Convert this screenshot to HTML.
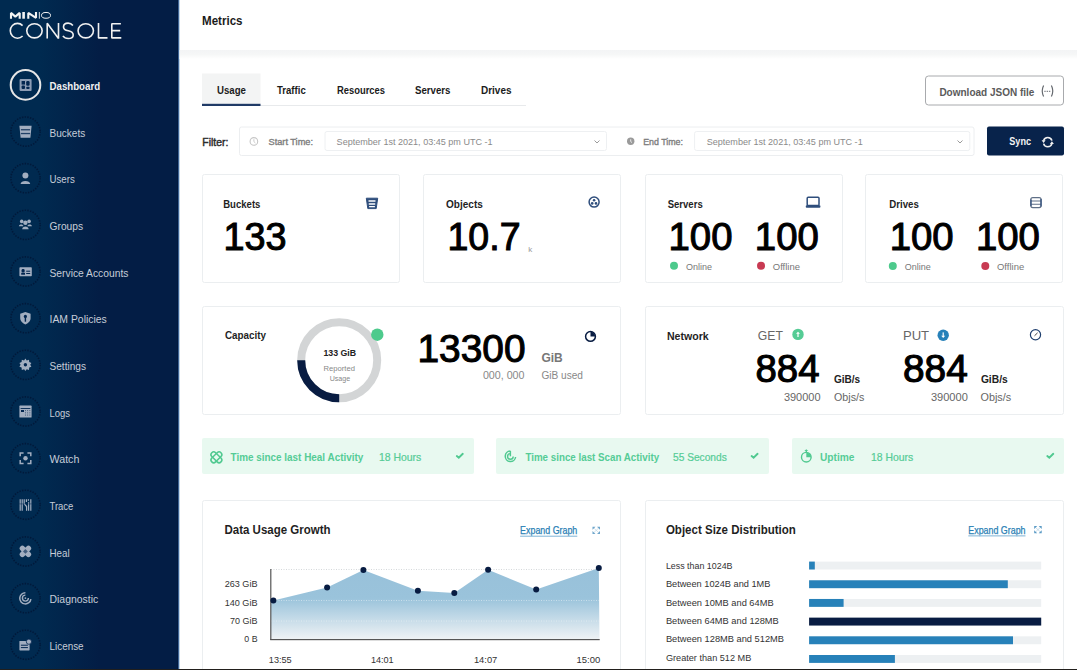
<!DOCTYPE html>
<html><head><meta charset="utf-8"><title>MinIO Console - Metrics</title>
<style>
html,body{margin:0;padding:0;background:#fff;width:1077px;height:670px;overflow:hidden}
svg{display:block}
text{font-family:"Liberation Sans", sans-serif}
</style></head><body>
<svg width="1077" height="670" viewBox="0 0 1077 670">
<defs>
<linearGradient id="sb" x1="0" y1="0" x2="1" y2="0">
<stop offset="0" stop-color="#002a50"/>
<stop offset="0.225" stop-color="#002a50"/>
<stop offset="0.56" stop-color="#031d45"/>
<stop offset="1" stop-color="#031d45"/>
</linearGradient>
<linearGradient id="area" gradientUnits="userSpaceOnUse" x1="0" y1="568" x2="0" y2="640">
<stop offset="0" stop-color="#98c1da"/>
<stop offset="0.42" stop-color="#9ac3db"/>
<stop offset="1" stop-color="#f0f3f5"/>
</linearGradient>
<linearGradient id="hdrsh" x1="0" y1="0" x2="0" y2="1">
<stop offset="0" stop-color="#f3f4f5"/><stop offset="0.5" stop-color="#f6f7f7"/>
<stop offset="1" stop-color="#ffffff"/>
</linearGradient>
</defs>

<rect x="0" y="0" width="178" height="670" fill="url(#sb)"/>
<rect x="177" y="0" width="1" height="670" fill="#01183d"/>
<rect x="178" y="0" width="1" height="670" fill="#3f6596"/>
<rect x="179" y="0" width="1" height="670" fill="#c2d6e8"/>
<g fill="none" stroke="#f4f4f4" stroke-linejoin="bevel">
<path d="M11 18.7 V12.9 L15.35 16.6 L19.7 12.9 V18.7" stroke-width="2.1"/>
<path d="M23.6 12 V18.7" stroke-width="2.6"/>
<path d="M28.3 18.7 V12.9 L36 17.8 V12" stroke-width="2.1"/>
<path d="M39.35 12 V18.7" stroke-width="0.9"/>
<ellipse cx="46" cy="15.35" rx="4.5" ry="2.9" stroke-width="1"/>
</g>
<g fill="none" stroke="#f0f0f0" stroke-width="1.6" stroke-linejoin="bevel">
<path d="M22.6 25.6 A7.2 7.4 0 1 0 22.6 36"/>
<ellipse cx="34.45" cy="30.8" rx="7.7" ry="7.1"/>
<path d="M47.2 38.6 V23.2 L58.5 38.4 V23"/>
<path d="M72.9 25.4 C71.6 23.8 70 23.1 68.1 23.1 C65.2 23.1 63.5 24.7 63.5 26.9 C63.5 29.4 65.6 30.2 68.3 30.8 C71.3 31.5 73.2 32.5 73.2 34.9 C73.2 37.2 71.2 38.5 68.2 38.5 C65.8 38.5 64 37.5 62.9 35.9"/>
<ellipse cx="85.75" cy="30.8" rx="7.7" ry="7.1"/>
<path d="M98.5 23 V37.9 H107.5"/>
<path d="M120.9 23.7 H111.8 V37.9 H121.3 M111.8 30.6 H120.2"/>
</g>
<circle cx="25.5" cy="84.9" r="14.8" fill="none" stroke="#e6e6e6" stroke-width="2"/>
<text x="49.5" y="89.9" font-size="11.3" font-weight="700" fill="#f0f0f0" textLength="50.6" lengthAdjust="spacingAndGlyphs" >Dashboard</text>
<g transform="translate(19.4 78.8)"><rect x="0.2" y="0.2" width="12" height="12" rx="1" fill="#8d9db5"/><rect x="2.2" y="2.2" width="3.4" height="3.6" fill="#022650"/><rect x="6.8" y="2.2" width="3.4" height="4.8" rx="1.2" fill="#022650"/><rect x="2.2" y="6.8" width="3.4" height="3.4" rx="1" fill="#022650"/><rect x="6.8" y="8" width="3.4" height="2.2" rx="1" fill="#022650"/></g>
<circle cx="25.5" cy="131.6" r="14.6" fill="none" stroke="#001636" stroke-width="1.6" stroke-dasharray="1.4 1.3" opacity="0.85"/>
<text x="49.5" y="136.6" font-size="11.3" font-weight="400" fill="#c6cdd8" textLength="35.8" lengthAdjust="spacingAndGlyphs" >Buckets</text>
<g transform="translate(19.4 125.5)"><path d="M0 0.3 H12.2 L11 12.2 H1.2 Z" fill="#a2aec0"/><rect x="1.5" y="3.6" width="9.2" height="1.3" fill="#022650" opacity="0.8"/><rect x="1.5" y="7.4" width="9.2" height="1.3" fill="#022650" opacity="0.8"/></g>
<circle cx="25.5" cy="178.2" r="14.6" fill="none" stroke="#001636" stroke-width="1.6" stroke-dasharray="1.4 1.3" opacity="0.85"/>
<text x="49.5" y="183.2" font-size="11.3" font-weight="400" fill="#c6cdd8" textLength="25.3" lengthAdjust="spacingAndGlyphs" >Users</text>
<g transform="translate(19.4 172.1)"><circle cx="6" cy="3.3" r="3" fill="#a2aec0"/><path d="M1.2 12 C1.2 7.8 10.8 7.8 10.8 12 Z" fill="#a2aec0"/></g>
<circle cx="25.5" cy="224.9" r="14.6" fill="none" stroke="#001636" stroke-width="1.6" stroke-dasharray="1.4 1.3" opacity="0.85"/>
<text x="49.5" y="229.9" font-size="11.3" font-weight="400" fill="#c6cdd8" textLength="33.6" lengthAdjust="spacingAndGlyphs" >Groups</text>
<g transform="translate(19.4 218.8)"><circle cx="6" cy="4" r="2.2" fill="#a2aec0"/><circle cx="2.3" cy="2.6" r="1.8" fill="#a2aec0"/><circle cx="9.7" cy="2.6" r="1.8" fill="#a2aec0"/><path d="M2.8 10.5 C2.8 6.8 9.2 6.8 9.2 10.5 Z" fill="#a2aec0"/><path d="M-0.5 7.5 C-0.5 5 4 5 4 7.5 Z" fill="#a2aec0"/><path d="M8 7.5 C8 5 12.5 5 12.5 7.5 Z" fill="#a2aec0"/></g>
<circle cx="25.5" cy="271.5" r="14.6" fill="none" stroke="#001636" stroke-width="1.6" stroke-dasharray="1.4 1.3" opacity="0.85"/>
<text x="49.5" y="276.5" font-size="11.3" font-weight="400" fill="#c6cdd8" textLength="78.9" lengthAdjust="spacingAndGlyphs" >Service Accounts</text>
<g transform="translate(19.4 265.4)"><rect x="0" y="1.8" width="12.4" height="9" rx="0.8" fill="#a2aec0"/><rect x="2.2" y="3.6" width="3" height="3.6" rx="1.2" fill="#022650"/><rect x="1.8" y="7.5" width="3.8" height="1.8" fill="#022650"/><rect x="6.8" y="5.3" width="4" height="1" fill="#022650"/><rect x="6.8" y="7.6" width="4" height="1" fill="#022650"/></g>
<circle cx="25.5" cy="318.2" r="14.6" fill="none" stroke="#001636" stroke-width="1.6" stroke-dasharray="1.4 1.3" opacity="0.85"/>
<text x="49.5" y="323.2" font-size="11.3" font-weight="400" fill="#c6cdd8" textLength="57.3" lengthAdjust="spacingAndGlyphs" >IAM Policies</text>
<g transform="translate(19.4 312.1)"><path d="M0.8 1.6 L6 -0.2 L11.2 1.6 V6 C11.2 9.2 8.5 11.4 6 12.4 C3.5 11.4 0.8 9.2 0.8 6 Z" fill="#a2aec0"/><circle cx="6" cy="4.3" r="1.6" fill="#022650"/><rect x="5.3" y="4.8" width="1.4" height="4.8" fill="#022650"/></g>
<circle cx="25.5" cy="364.9" r="14.6" fill="none" stroke="#001636" stroke-width="1.6" stroke-dasharray="1.4 1.3" opacity="0.85"/>
<text x="49.5" y="369.9" font-size="11.3" font-weight="400" fill="#c6cdd8" textLength="36.5" lengthAdjust="spacingAndGlyphs" >Settings</text>
<g transform="translate(19.4 358.8)"><path d="M6 -0.3 L7.3 1.6 L9.6 0.9 L9.8 3.2 L12 4.1 L10.8 6 L12 7.9 L9.8 8.8 L9.6 11.1 L7.3 10.4 L6 12.3 L4.7 10.4 L2.4 11.1 L2.2 8.8 L0 7.9 L1.2 6 L0 4.1 L2.2 3.2 L2.4 0.9 L4.7 1.6 Z" fill="#a2aec0"/><circle cx="6" cy="6" r="1.7" fill="#022650"/></g>
<circle cx="25.5" cy="411.5" r="14.6" fill="none" stroke="#001636" stroke-width="1.6" stroke-dasharray="1.4 1.3" opacity="0.85"/>
<text x="49.5" y="416.5" font-size="11.3" font-weight="400" fill="#c6cdd8" textLength="20.6" lengthAdjust="spacingAndGlyphs" >Logs</text>
<g transform="translate(19.4 405.4)"><rect x="0" y="0.2" width="12.2" height="12" rx="0.6" fill="#a2aec0"/><rect x="1.2" y="2.6" width="9.8" height="0.9" fill="#022650"/><rect x="1.6" y="4.6" width="3" height="2" fill="#022650"/><rect x="5.6" y="4.8" width="0.9" height="0.9" fill="#022650" opacity="0.7"/><rect x="7.8" y="4.8" width="0.9" height="0.9" fill="#022650" opacity="0.7"/><rect x="10.0" y="4.8" width="0.9" height="0.9" fill="#022650" opacity="0.7"/><rect x="5.6" y="7.0" width="0.9" height="0.9" fill="#022650" opacity="0.7"/><rect x="7.8" y="7.0" width="0.9" height="0.9" fill="#022650" opacity="0.7"/><rect x="10.0" y="7.0" width="0.9" height="0.9" fill="#022650" opacity="0.7"/><rect x="5.6" y="9.2" width="0.9" height="0.9" fill="#022650" opacity="0.7"/><rect x="7.8" y="9.2" width="0.9" height="0.9" fill="#022650" opacity="0.7"/><rect x="10.0" y="9.2" width="0.9" height="0.9" fill="#022650" opacity="0.7"/></g>
<circle cx="25.5" cy="458.2" r="14.6" fill="none" stroke="#001636" stroke-width="1.6" stroke-dasharray="1.4 1.3" opacity="0.85"/>
<text x="49.5" y="463.2" font-size="11.3" font-weight="400" fill="#c6cdd8" textLength="29.9" lengthAdjust="spacingAndGlyphs" >Watch</text>
<g transform="translate(19.4 452.1)"><path d="M0.8 4.2 V0.8 H4.2 M8 0.8 H11.4 V4.2 M11.4 8 V11.4 H8 M4.2 11.4 H0.8 V8" fill="none" stroke="#a2aec0" stroke-width="1.5"/><circle cx="6.1" cy="6.1" r="2.2" fill="#a2aec0"/></g>
<circle cx="25.5" cy="504.8" r="14.6" fill="none" stroke="#001636" stroke-width="1.6" stroke-dasharray="1.4 1.3" opacity="0.85"/>
<text x="49.5" y="509.8" font-size="11.3" font-weight="400" fill="#c6cdd8" textLength="23.9" lengthAdjust="spacingAndGlyphs" >Trace</text>
<g transform="translate(19.4 498.7)"><path d="M0.8 0.5 V12 M2.8 0.5 V12 M4.8 0.5 V5 L7.2 7.8 V12 M7 0.5 V3.2 M9.2 3.5 V12 M11.4 0.5 V12 M9 0.5 V2" fill="none" stroke="#a2aec0" stroke-width="1.2"/><path d="M0 5.2 H12.2" stroke="#022650" stroke-width="0.8" opacity="0.6"/></g>
<circle cx="25.5" cy="551.5" r="14.6" fill="none" stroke="#001636" stroke-width="1.6" stroke-dasharray="1.4 1.3" opacity="0.85"/>
<text x="49.5" y="556.5" font-size="11.3" font-weight="400" fill="#c6cdd8" textLength="20.1" lengthAdjust="spacingAndGlyphs" >Heal</text>
<g transform="translate(19.4 545.4)"><g transform="rotate(45 6 6)"><rect x="-1" y="3.3" width="14" height="5.4" rx="2.7" fill="#a2aec0"/><rect x="3.3" y="-1" width="5.4" height="14" rx="2.7" fill="#a2aec0"/><rect x="4.3" y="4.3" width="3.4" height="3.4" fill="#022650" opacity="0.6"/></g></g>
<circle cx="25.5" cy="598.2" r="14.6" fill="none" stroke="#001636" stroke-width="1.6" stroke-dasharray="1.4 1.3" opacity="0.85"/>
<text x="49.5" y="603.2" font-size="11.3" font-weight="400" fill="#c6cdd8" textLength="48.8" lengthAdjust="spacingAndGlyphs" >Diagnostic</text>
<g transform="translate(19.4 592.1)"><path d="M11.5 7 A5.6 5.6 0 1 1 6 0.6" fill="none" stroke="#a2aec0" stroke-width="1.5"/><path d="M6 3 A3 3 0 1 0 9 6" fill="none" stroke="#a2aec0" stroke-width="1.4"/><circle cx="6" cy="6" r="0.9" fill="#a2aec0"/></g>
<circle cx="25.5" cy="644.8" r="14.6" fill="none" stroke="#001636" stroke-width="1.6" stroke-dasharray="1.4 1.3" opacity="0.85"/>
<text x="49.5" y="649.8" font-size="11.3" font-weight="400" fill="#c6cdd8" textLength="34.1" lengthAdjust="spacingAndGlyphs" >License</text>
<g transform="translate(19.4 638.7)"><rect x="0" y="2.2" width="10.2" height="9.5" rx="0.6" fill="#a2aec0"/><rect x="1.5" y="6" width="7" height="1" fill="#022650"/><rect x="1.5" y="8.4" width="7" height="1" fill="#022650"/><circle cx="9.5" cy="3" r="2.6" fill="#a2aec0" stroke="#022650" stroke-width="0.8"/></g>
<rect x="179.5" y="50" width="897.5" height="9" fill="url(#hdrsh)"/>
<text x="202" y="25.3" font-size="12.7" font-weight="700" fill="#1b1b1b" textLength="40.5" lengthAdjust="spacingAndGlyphs" >Metrics</text>
<rect x="202" y="73.5" width="58.5" height="31" fill="#f3f4f4"/>
<rect x="202" y="105" width="324" height="1" fill="#e8eaec"/>
<rect x="202" y="103.8" width="58.5" height="2.2" fill="#203a66"/>
<text x="217" y="94" font-size="11.5" font-weight="700" fill="#1b1b1b" textLength="29" lengthAdjust="spacingAndGlyphs" >Usage</text>
<text x="277" y="94" font-size="11.5" font-weight="700" fill="#1b1b1b" textLength="28.69999999999999" lengthAdjust="spacingAndGlyphs" >Traffic</text>
<text x="337" y="94" font-size="11.5" font-weight="700" fill="#1b1b1b" textLength="48" lengthAdjust="spacingAndGlyphs" >Resources</text>
<text x="415" y="94" font-size="11.5" font-weight="700" fill="#1b1b1b" textLength="35.5" lengthAdjust="spacingAndGlyphs" >Servers</text>
<text x="481" y="94" font-size="11.5" font-weight="700" fill="#1b1b1b" textLength="30.5" lengthAdjust="spacingAndGlyphs" >Drives</text>
<rect x="925.5" y="76" width="138" height="29" rx="3" fill="#fff" stroke="#a8aaad" stroke-width="1"/>
<text x="939.4" y="96" font-size="11.3" font-weight="700" fill="#5a5a5a" textLength="95" lengthAdjust="spacingAndGlyphs" >Download JSON file</text>
<path d="M1043.6 85.6 Q1040.9 91 1043.6 96.5 M1051.4 85.6 Q1054.1 91 1051.4 96.5" fill="none" stroke="#666a70" stroke-width="1.2"/>
<path d="M1044.3 91.3 H1051" stroke="#666a70" stroke-width="1" stroke-dasharray="1.4 0.9"/>
<text x="202.3" y="145.5" font-size="11" font-weight="400" fill="#2b2b2b" textLength="26" lengthAdjust="spacingAndGlyphs" stroke="#2b2b2b" stroke-width="0.45" >Filter:</text>
<rect x="239.5" y="127" width="734.5" height="28.5" rx="2" fill="#fff" stroke="#eceef0" stroke-width="1"/>
<circle cx="253.9" cy="141.4" r="3.8" fill="none" stroke="#c6c6c6" stroke-width="1.1"/><path d="M253.9 139.2 V141.6 L255.4 143" fill="none" stroke="#c6c6c6" stroke-width="0.9"/>
<text x="268.5" y="144.5" font-size="9" font-weight="400" fill="#7e7e7e" textLength="44.5" lengthAdjust="spacingAndGlyphs" stroke="#7e7e7e" stroke-width="0.35" >Start Time:</text>
<rect x="325" y="131.5" width="281.5" height="19" rx="2" fill="#fff" stroke="#eef0f2" stroke-width="1"/>
<text x="336.6" y="144.5" font-size="9" font-weight="400" fill="#8a8a8a" textLength="156" lengthAdjust="spacingAndGlyphs" >September 1st 2021, 03:45 pm UTC -1</text>
<path d="M594.5 140.5 l2.5 2.5 l2.5 -2.5" fill="none" stroke="#9a9a9a" stroke-width="1"/>
<circle cx="630.7" cy="141.3" r="3.7" fill="#9a9a9a"/><path d="M630.7 139.3 V141.5 L632 142.6" fill="none" stroke="#fff" stroke-width="0.8"/>
<text x="643.2" y="144.5" font-size="9" font-weight="400" fill="#7e7e7e" textLength="39.8" lengthAdjust="spacingAndGlyphs" stroke="#7e7e7e" stroke-width="0.35" >End Time:</text>
<rect x="694.6" y="131.5" width="275.2" height="19" rx="2" fill="#fff" stroke="#eef0f2" stroke-width="1"/>
<text x="706.7" y="144.5" font-size="9" font-weight="400" fill="#8a8a8a" textLength="156" lengthAdjust="spacingAndGlyphs" >September 1st 2021, 03:45 pm UTC -1</text>
<path d="M957.5 140.5 l2.5 2.5 l2.5 -2.5" fill="none" stroke="#9a9a9a" stroke-width="1"/>
<rect x="987" y="126.5" width="77" height="29" rx="2" fill="#08234b"/>
<text x="1009.3" y="144.7" font-size="11.3" font-weight="700" fill="#f4f4f4" textLength="21.7" lengthAdjust="spacingAndGlyphs" >Sync</text>
<path d="M1043.6 140.6 A4.3 4.3 0 0 1 1051.9 140.6 M1051.9 143.6 A4.3 4.3 0 0 1 1043.6 143.6" fill="none" stroke="#f0f0f0" stroke-width="1.6"/>
<path d="M1041.6 140.2 L1045.6 140.2 L1043.6 143 Z M1049.9 144 L1053.9 144 L1051.9 141.2 Z" fill="#f0f0f0"/>
<rect x="202.5" y="174.5" width="197" height="108" rx="2" fill="#fff" stroke="#ebeef0" stroke-width="1"/>
<rect x="423.5" y="174.5" width="197" height="108" rx="2" fill="#fff" stroke="#ebeef0" stroke-width="1"/>
<rect x="645.5" y="174.5" width="197" height="108" rx="2" fill="#fff" stroke="#ebeef0" stroke-width="1"/>
<rect x="865.5" y="174.5" width="197" height="108" rx="2" fill="#fff" stroke="#ebeef0" stroke-width="1"/>
<path d="M366.3 198.2 H377.7 L376.2 208.6 H367.8 Z" fill="#2f4e7c" stroke="#2f4e7c" stroke-width="1" stroke-linejoin="round"/>
<rect x="368.3" y="200.3" width="7.4" height="1.5" rx="0.7" fill="#fff"/><rect x="368.6" y="203.2" width="6.8" height="1.5" rx="0.7" fill="#fff"/><rect x="369" y="206" width="6" height="1.3" rx="0.6" fill="#fff"/>
<circle cx="594.1" cy="202.1" r="5" fill="none" stroke="#2f4e7c" stroke-width="1.5"/>
<circle cx="594.1" cy="200.3" r="1.3" fill="#2f4e7c"/><circle cx="592.2" cy="203.4" r="1.3" fill="#2f4e7c"/><circle cx="596" cy="203.4" r="1.3" fill="#2f4e7c"/>
<rect x="807.2" y="197.2" width="11.8" height="8.2" rx="1" fill="none" stroke="#2f4e7c" stroke-width="1.5"/>
<rect x="805.8" y="205.2" width="14.6" height="2.5" rx="0.8" fill="#2f4e7c"/>
<rect x="1030.8" y="197.6" width="10.3" height="10" rx="2" fill="none" stroke="#5f6f86" stroke-width="1.2"/>
<path d="M1031 201 H1041 M1031 204.3 H1041" stroke="#5f6f86" stroke-width="1.1"/>
<path d="M1031 199.5 V206" stroke="#2f4e7c" stroke-width="1.2"/><path d="M1041 199 V206.5" stroke="#2f4e7c" stroke-width="1.2"/>
<text x="223.2" y="208" font-size="11.5" font-weight="700" fill="#1f1f1f" textLength="37.2" lengthAdjust="spacingAndGlyphs" >Buckets</text>
<text x="223.5" y="249.9" font-size="39.5" font-weight="400" fill="#000" textLength="63" lengthAdjust="spacingAndGlyphs" stroke="#000" stroke-width="1.1" >133</text>
<text x="446" y="208" font-size="11.5" font-weight="700" fill="#1f1f1f" textLength="36.8" lengthAdjust="spacingAndGlyphs" >Objects</text>
<text x="447.5" y="249.9" font-size="39.5" font-weight="400" fill="#000" textLength="73" lengthAdjust="spacingAndGlyphs" stroke="#000" stroke-width="1.1" >10.7</text>
<text x="528.3" y="251.5" font-size="8" font-weight="400" fill="#999" >k</text>
<text x="667.7" y="208" font-size="11.5" font-weight="700" fill="#1f1f1f" textLength="35" lengthAdjust="spacingAndGlyphs" >Servers</text>
<text x="668.5" y="249.9" font-size="39.5" font-weight="400" fill="#000" textLength="64" lengthAdjust="spacingAndGlyphs" stroke="#000" stroke-width="1.1" >100</text>
<text x="754.8" y="249.9" font-size="39.5" font-weight="400" fill="#000" textLength="64" lengthAdjust="spacingAndGlyphs" stroke="#000" stroke-width="1.1" >100</text>
<circle cx="674" cy="265.8" r="4" fill="#4dca8c"/>
<text x="685.9" y="269.5" font-size="9.5" font-weight="400" fill="#777" textLength="26" lengthAdjust="spacingAndGlyphs" >Online</text>
<circle cx="761" cy="265.8" r="4" fill="#c83a52"/>
<text x="772.8" y="269.5" font-size="9.5" font-weight="400" fill="#777" textLength="27.2" lengthAdjust="spacingAndGlyphs" >Offline</text>
<text x="889.2" y="208" font-size="11.5" font-weight="700" fill="#1f1f1f" textLength="29.6" lengthAdjust="spacingAndGlyphs" >Drives</text>
<text x="889.7" y="249.9" font-size="39.5" font-weight="400" fill="#000" textLength="64" lengthAdjust="spacingAndGlyphs" stroke="#000" stroke-width="1.1" >100</text>
<text x="975.9" y="249.9" font-size="39.5" font-weight="400" fill="#000" textLength="64" lengthAdjust="spacingAndGlyphs" stroke="#000" stroke-width="1.1" >100</text>
<circle cx="892.8" cy="266" r="4" fill="#4dca8c"/>
<text x="904.7" y="269.5" font-size="9.5" font-weight="400" fill="#777" textLength="26" lengthAdjust="spacingAndGlyphs" >Online</text>
<circle cx="985.3" cy="266" r="4" fill="#c83a52"/>
<text x="997" y="269.5" font-size="9.5" font-weight="400" fill="#777" textLength="27.2" lengthAdjust="spacingAndGlyphs" >Offline</text>
<rect x="202.5" y="306.5" width="418" height="108" rx="2" fill="#fff" stroke="#ebeef0" stroke-width="1"/>
<rect x="645.5" y="306.5" width="418" height="108" rx="2" fill="#fff" stroke="#ebeef0" stroke-width="1"/>
<text x="224.9" y="339.4" font-size="10.7" font-weight="700" fill="#1f1f1f" textLength="41" lengthAdjust="spacingAndGlyphs" >Capacity</text>
<circle cx="339.2" cy="360.2" r="38" fill="none" stroke="#d3d5d6" stroke-width="8"/>
<path d="M301.2 360.2 A38 38 0 0 0 339.2 398.2" fill="none" stroke="#081c42" stroke-width="8"/>
<circle cx="377.3" cy="334.7" r="6.2" fill="#4dca8c"/>
<text x="339.8" y="356.2" font-size="9.2" font-weight="700" fill="#222" textLength="32.7" lengthAdjust="spacingAndGlyphs" text-anchor="middle" >133 GiB</text>
<text x="339.2" y="370.5" font-size="8" font-weight="400" fill="#888" textLength="31.4" lengthAdjust="spacingAndGlyphs" text-anchor="middle" >Reported</text>
<text x="339.9" y="380.8" font-size="8" font-weight="400" fill="#888" textLength="20.5" lengthAdjust="spacingAndGlyphs" text-anchor="middle" >Usage</text>
<text x="417.5" y="361.8" font-size="39.5" font-weight="400" fill="#000" textLength="108" lengthAdjust="spacingAndGlyphs" stroke="#000" stroke-width="1.1" >13300</text>
<text x="541.4" y="362.4" font-size="13" font-weight="700" fill="#777" textLength="21.3" lengthAdjust="spacingAndGlyphs" >GiB</text>
<text x="482.9" y="379.4" font-size="10" font-weight="400" fill="#888" textLength="41.6" lengthAdjust="spacingAndGlyphs" >000, 000</text>
<text x="541.4" y="379.4" font-size="10" font-weight="400" fill="#888" textLength="41.6" lengthAdjust="spacingAndGlyphs" >GiB used</text>
<circle cx="590.5" cy="336.4" r="4.9" fill="none" stroke="#081c42" stroke-width="1.5"/><path d="M590.5 336.4 V331.8 A4.6 4.6 0 0 1 595.1 336.4 Z" fill="#081c42"/>
<text x="666.9" y="340.1" font-size="10.7" font-weight="700" fill="#1f1f1f" textLength="41.8" lengthAdjust="spacingAndGlyphs" >Network</text>
<text x="757.8" y="340.1" font-size="13.5" font-weight="400" fill="#666" textLength="25.1" lengthAdjust="spacingAndGlyphs" >GET</text>
<circle cx="798" cy="334.4" r="5.7" fill="#55cc95"/><path d="M796 333.8 L798 331.7 L800 333.8 Z" fill="#fff"/><rect x="797.4" y="333" width="1.2" height="4" fill="#fff"/>
<text x="755.5" y="381.7" font-size="39" font-weight="400" fill="#000" textLength="64" lengthAdjust="spacingAndGlyphs" stroke="#000" stroke-width="1.1" >884</text>
<text x="834" y="382.9" font-size="10.7" font-weight="700" fill="#222" textLength="26.2" lengthAdjust="spacingAndGlyphs" >GiB/s</text>
<text x="783.9" y="400.9" font-size="10" font-weight="400" fill="#666" textLength="36.6" lengthAdjust="spacingAndGlyphs" >390000</text>
<text x="834" y="400.9" font-size="10" font-weight="400" fill="#666" textLength="30.3" lengthAdjust="spacingAndGlyphs" >Objs/s</text>
<text x="902.9" y="340.1" font-size="13.5" font-weight="400" fill="#666" textLength="26.2" lengthAdjust="spacingAndGlyphs" >PUT</text>
<circle cx="943.2" cy="335.2" r="5.7" fill="#2781b9"/><path d="M941.2 335.8 L943.2 337.9 L945.2 335.8 Z" fill="#fff"/><rect x="942.6" y="332.4" width="1.2" height="4" fill="#fff"/>
<text x="903" y="381.7" font-size="39" font-weight="400" fill="#000" textLength="64.8" lengthAdjust="spacingAndGlyphs" stroke="#000" stroke-width="1.1" >884</text>
<text x="980.9" y="382.9" font-size="10.7" font-weight="700" fill="#222" textLength="26.8" lengthAdjust="spacingAndGlyphs" >GiB/s</text>
<text x="930.9" y="400.9" font-size="10" font-weight="400" fill="#666" textLength="36.9" lengthAdjust="spacingAndGlyphs" >390000</text>
<text x="980.5" y="400.9" font-size="10" font-weight="400" fill="#666" textLength="30.6" lengthAdjust="spacingAndGlyphs" >Objs/s</text>
<circle cx="1035.5" cy="334.7" r="5.1" fill="none" stroke="#1f3f6e" stroke-width="1.2"/><path d="M1034.5 335.8 L1037.6 332.8" stroke="#444" stroke-width="1"/>
<rect x="202" y="438" width="272" height="36" rx="2" fill="#e8f9f0"/>
<text x="230.5" y="460.5" font-size="10.3" font-weight="700" fill="#55cc96" textLength="132.8" lengthAdjust="spacingAndGlyphs" >Time since last Heal Activity</text>
<text x="378.9" y="460.5" font-size="10.3" font-weight="400" fill="#55cc96" textLength="42.3" lengthAdjust="spacingAndGlyphs" stroke="#55cc96" stroke-width="0.2" >18 Hours</text>
<path d="M456.8 456 l2 1.7 l4 -3.9" fill="none" stroke="#50c990" stroke-width="1.9" stroke-linecap="round"/>
<rect x="496" y="438" width="273" height="36" rx="2" fill="#e8f9f0"/>
<text x="525.4" y="460.5" font-size="10.3" font-weight="700" fill="#55cc96" textLength="133.7" lengthAdjust="spacingAndGlyphs" >Time since last Scan Activity</text>
<text x="673" y="460.5" font-size="10.3" font-weight="400" fill="#55cc96" textLength="53.8" lengthAdjust="spacingAndGlyphs" stroke="#55cc96" stroke-width="0.2" >55 Seconds</text>
<path d="M751.6 456 l2 1.7 l4 -3.9" fill="none" stroke="#50c990" stroke-width="1.9" stroke-linecap="round"/>
<rect x="792" y="438" width="272" height="36" rx="2" fill="#e8f9f0"/>
<text x="820" y="460.5" font-size="10.3" font-weight="700" fill="#55cc96" textLength="34.5" lengthAdjust="spacingAndGlyphs" >Uptime</text>
<text x="871" y="460.5" font-size="10.3" font-weight="400" fill="#55cc96" textLength="42.2" lengthAdjust="spacingAndGlyphs" stroke="#55cc96" stroke-width="0.2" >18 Hours</text>
<path d="M1047.3 456 l2 1.7 l4 -3.9" fill="none" stroke="#50c990" stroke-width="1.9" stroke-linecap="round"/>
<g transform="rotate(45 216.4 457.3)" fill="none" stroke="#50c990" stroke-width="1.5"><rect x="209.9" y="454.6" width="13" height="5.4" rx="2.7"/><rect x="213.7" y="450.8" width="5.4" height="13" rx="2.7"/></g>
<path d="M515.6 457 A5.2 5.2 0 1 1 510.4 451.1" fill="none" stroke="#50c990" stroke-width="1.5"/><path d="M510.4 453.6 A2.8 2.8 0 1 0 513.2 456.4" fill="none" stroke="#50c990" stroke-width="1.4"/><path d="M510.4 451 V456.3" stroke="#50c990" stroke-width="1.4"/>
<circle cx="806.3" cy="457.2" r="4.8" fill="none" stroke="#50c990" stroke-width="1.4"/><path d="M806.3 457.2 V452.4 A4.8 4.8 0 0 1 811.1 457.2 Z" fill="#50c990"/><path d="M804.3 451 H808.3 L806.3 449.2 Z" fill="#50c990"/><rect x="805.6" y="450.5" width="1.4" height="2" fill="#50c990"/>
<rect x="202.5" y="500.5" width="418" height="180" rx="2" fill="#fff" stroke="#ebeef0" stroke-width="1"/>
<rect x="645.5" y="500.5" width="418" height="180" rx="2" fill="#fff" stroke="#ebeef0" stroke-width="1"/>
<text x="224.5" y="533.5" font-size="12.5" font-weight="700" fill="#1f1f1f" textLength="106" lengthAdjust="spacingAndGlyphs" >Data Usage Growth</text>
<text x="520.1" y="533.5" font-size="10.2" font-weight="400" fill="#2a7fb5" textLength="57.2" lengthAdjust="spacingAndGlyphs" stroke="#2a7fb5" stroke-width="0.25" >Expand Graph</text>
<rect x="520.1" y="535.6" width="57.2" height="1.3" fill="#9cc5df"/>
<path d="M592.5 526.7 h3 l-3 3 Z M600.0 526.7 h-3 l3 3 Z M592.5 533.9000000000001 h3 l-3 -3 Z M600.0 533.9000000000001 h-3 l3 -3 Z" fill="#6fa6cb"/><path d="M594.0 528.2 L598.5 532.4000000000001 M598.5 528.2 L594.0 532.4000000000001" stroke="#6fa6cb" stroke-width="0.6" opacity="0.5"/>
<polygon points="271,600.6 273.4,600.6 327.1,587.5 363.4,570 417.9,590.7 454.3,592.9 488.1,569.8 536.2,589.4 598.8,567.9 599.5,639.5 271,639.5" fill="url(#area)"/>
<line x1="271" y1="569.5" x2="599.5" y2="569.5" stroke="#d5d8da" stroke-width="1" stroke-dasharray="1 1.5"/>
<line x1="271" y1="600.5" x2="599.5" y2="600.5" stroke="#ffffff" stroke-width="1" stroke-dasharray="1 1.5" opacity="0.45"/>
<line x1="271" y1="621" x2="599.5" y2="621" stroke="#ffffff" stroke-width="1" stroke-dasharray="1 1.5" opacity="0.45"/>
<rect x="270.2" y="569" width="1.2" height="71" fill="#555"/>
<rect x="270.2" y="639" width="329.5" height="1.2" fill="#555"/>
<circle cx="273.4" cy="600.6" r="3" fill="#081c42"/>
<circle cx="327.1" cy="587.5" r="3" fill="#081c42"/>
<circle cx="363.4" cy="570" r="3" fill="#081c42"/>
<circle cx="417.9" cy="590.7" r="3" fill="#081c42"/>
<circle cx="454.3" cy="592.9" r="3" fill="#081c42"/>
<circle cx="488.1" cy="569.8" r="3" fill="#081c42"/>
<circle cx="536.2" cy="589.4" r="3" fill="#081c42"/>
<circle cx="598.8" cy="567.9" r="3" fill="#081c42"/>
<text x="224.7" y="587.4" font-size="9.5" font-weight="400" fill="#333" textLength="32.8" lengthAdjust="spacingAndGlyphs" >263 GiB</text>
<text x="224.7" y="605.6" font-size="9.5" font-weight="400" fill="#333" textLength="32.8" lengthAdjust="spacingAndGlyphs" >140 GiB</text>
<text x="230.1" y="624.1999999999999" font-size="9.5" font-weight="400" fill="#333" textLength="27.4" lengthAdjust="spacingAndGlyphs" >70 GiB</text>
<text x="244.3" y="641.9" font-size="9.5" font-weight="400" fill="#333" textLength="13.2" lengthAdjust="spacingAndGlyphs" >0 B</text>
<text x="268.8" y="662.6" font-size="9.5" font-weight="400" fill="#333" textLength="22.9" lengthAdjust="spacingAndGlyphs" >13:55</text>
<text x="370.9" y="662.6" font-size="9.5" font-weight="400" fill="#333" textLength="22.8" lengthAdjust="spacingAndGlyphs" >14:01</text>
<text x="473.9" y="662.6" font-size="9.5" font-weight="400" fill="#333" textLength="23.4" lengthAdjust="spacingAndGlyphs" >14:07</text>
<text x="576.5" y="662.6" font-size="9.5" font-weight="400" fill="#333" textLength="23.7" lengthAdjust="spacingAndGlyphs" >15:00</text>
<text x="665.9" y="533.7" font-size="12.5" font-weight="700" fill="#1f1f1f" textLength="130" lengthAdjust="spacingAndGlyphs" >Object Size Distribution</text>
<text x="968.3" y="533.5" font-size="10.2" font-weight="400" fill="#2a7fb5" textLength="57.2" lengthAdjust="spacingAndGlyphs" stroke="#2a7fb5" stroke-width="0.25" >Expand Graph</text>
<rect x="968.3" y="535.2" width="57.2" height="1.3" fill="#9cc5df"/>
<path d="M1034.2 526.1 h3 l-3 3 Z M1041.7 526.1 h-3 l3 3 Z M1034.2 533.3000000000001 h3 l-3 -3 Z M1041.7 533.3000000000001 h-3 l3 -3 Z" fill="#5a9ac5"/><path d="M1035.7 527.6 L1040.2 531.8000000000001 M1040.2 527.6 L1035.7 531.8000000000001" stroke="#5a9ac5" stroke-width="0.6" opacity="0.5"/>
<text x="665.9" y="569.10" font-size="9.4" font-weight="400" fill="#333" textLength="66.6" lengthAdjust="spacingAndGlyphs" >Less than 1024B</text>
<rect x="809.1" y="561.60" width="232.1" height="7.9" fill="#edf0f2"/>
<rect x="809.1" y="561.60" width="5.7" height="7.9" fill="#2781b9"/>
<text x="665.9" y="587.42" font-size="9.4" font-weight="400" fill="#333" textLength="104.5" lengthAdjust="spacingAndGlyphs" >Between 1024B and 1MB</text>
<rect x="809.1" y="580.28" width="232.1" height="7.9" fill="#edf0f2"/>
<rect x="809.1" y="580.28" width="198.7" height="7.9" fill="#2781b9"/>
<text x="665.9" y="605.74" font-size="9.4" font-weight="400" fill="#333" textLength="107.7" lengthAdjust="spacingAndGlyphs" >Between 10MB and 64MB</text>
<rect x="809.1" y="598.96" width="232.1" height="7.9" fill="#edf0f2"/>
<rect x="809.1" y="598.96" width="34.5" height="7.9" fill="#2781b9"/>
<text x="665.9" y="624.06" font-size="9.4" font-weight="400" fill="#333" textLength="112.9" lengthAdjust="spacingAndGlyphs" >Between 64MB and 128MB</text>
<rect x="809.1" y="617.64" width="232.1" height="7.9" fill="#edf0f2"/>
<rect x="809.1" y="617.64" width="232.1" height="7.9" fill="#081c42"/>
<text x="665.9" y="642.38" font-size="9.4" font-weight="400" fill="#333" textLength="118.1" lengthAdjust="spacingAndGlyphs" >Between 128MB and 512MB</text>
<rect x="809.1" y="636.32" width="232.1" height="7.9" fill="#edf0f2"/>
<rect x="809.1" y="636.32" width="203.9" height="7.9" fill="#2781b9"/>
<text x="665.9" y="660.70" font-size="9.4" font-weight="400" fill="#333" textLength="85.4" lengthAdjust="spacingAndGlyphs" >Greater than 512 MB</text>
<rect x="809.1" y="655.00" width="232.1" height="7.9" fill="#edf0f2"/>
<rect x="809.1" y="655.00" width="85.8" height="7.9" fill="#2781b9"/>
<rect x="0" y="669" width="1077" height="1" fill="#221f1c"/>
</svg></body></html>
